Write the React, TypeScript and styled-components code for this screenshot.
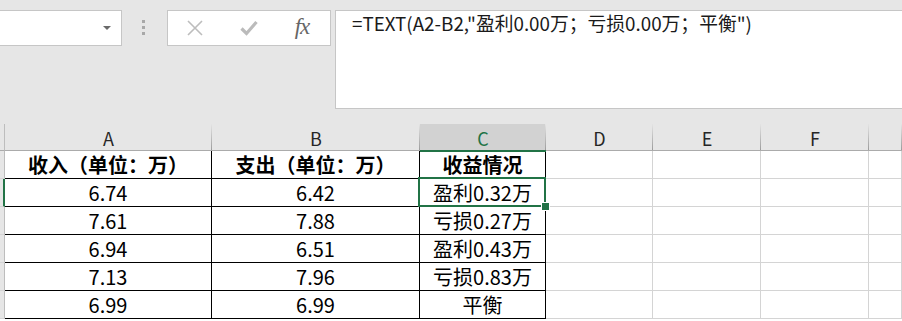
import React from 'react'
import styled, { createGlobalStyle } from 'styled-components'

const GREEN = '#217346'
const CJK = '"Noto Sans CJK SC", "Liberation Sans", sans-serif'

const GlobalStyle = createGlobalStyle`
  html, body {
    margin: 0;
    padding: 0;
    background: #fff;
  }
`

const Page = styled.div`
  width: 902px;
  height: 321px;
  overflow: hidden;
  display: flex;
  flex-direction: column;
  font-family: ${CJK};
`

const TopBar = styled.div`
  height: 124px;
  flex: none;
  background: #e6e6e6;
  display: flex;
  align-items: flex-start;
  padding-top: 10px;
  box-sizing: border-box;
`

const NameBox = styled.div`
  width: 122px;
  height: 36px;
  box-sizing: border-box;
  background: #fff;
  border: 1px solid #c6c6c6;
  border-left: none;
  display: flex;
  align-items: center;
  justify-content: flex-end;
  padding-right: 10px;
`

const Grip = styled.svg`
  margin-left: 20px;
  margin-top: 10px;
`

const ButtonBox = styled.div`
  margin-left: 22px;
  width: 164px;
  height: 36px;
  box-sizing: border-box;
  background: #fff;
  border: 1px solid #c6c6c6;
  display: flex;
  align-items: center;
`

const IconSlot = styled.div`
  width: 54px;
  display: flex;
  justify-content: center;
  align-items: center;
`

const Fx = styled.span`
  font-family: "Liberation Serif", "DejaVu Serif", serif;
  font-style: italic;
  font-size: 23px;
  color: #666;
  letter-spacing: -1px;
  line-height: 1;
  margin-top: -3px;
  margin-left: -2px;
`

const FormulaBox = styled.div`
  margin-left: 4px;
  flex: 1;
  height: 99px;
  box-sizing: border-box;
  background: #fff;
  border: 1px solid #c6c6c6;
  border-right: none;
  padding: 1px 0 0 16px;
  font-size: 18.8px;
  line-height: 22px;
  color: #1a1a1a;
  white-space: nowrap;
`

const Sheet = styled.div`
  display: grid;
  grid-template-columns: 5px 207px 208px 126px 107px 108px 108px 1fr;
  grid-auto-rows: 28px;
  grid-template-rows: 27px;
`

const Corner = styled.div`
  background: #e6e6e6;
  border-right: 1px solid #bdbdbd;
  border-bottom: 1px solid #ababab;
`

const ColHead = styled.div<{ $active?: boolean }>`
  display: flex;
  align-items: center;
  justify-content: center;
  font-size: 18px;
  color: ${p => (p.$active ? GREEN : '#262626')};
  background: linear-gradient(#e4e4e4, #9c9c9c) right / 1px 100% no-repeat,
    ${p => (p.$active ? '#d2d2d2' : '#e6e6e6')};
  border-bottom: ${p => (p.$active ? `2px solid ${GREEN}` : '1px solid #ababab')};
  margin-bottom: ${p => (p.$active ? '-1px' : '0')};
  position: relative;
  z-index: ${p => (p.$active ? 1 : 0)};
  padding-top: 1px;
`

const RowHead = styled.div<{ $active?: boolean }>`
  background: #e6e6e6;
  border-right: ${p => (p.$active ? `2px solid ${GREEN}` : '1px solid #bdbdbd')};
  border-bottom: 1px solid #d4d4d4;
`

const Cell = styled.div<{ $table?: boolean; $bold?: boolean }>`
  position: relative;
  display: flex;
  align-items: center;
  justify-content: center;
  font-size: 20px;
  font-weight: ${p => (p.$bold ? 700 : 400)};
  color: #000;
  border-right: 1px solid ${p => (p.$table ? '#000' : '#d4d4d4')};
  border-bottom: 1px solid ${p => (p.$table ? '#000' : '#d4d4d4')};
  white-space: nowrap;
`

const Selection = styled.div`
  position: absolute;
  top: -2px;
  left: -2px;
  right: -1px;
  bottom: -1px;
  border: 2px solid ${GREEN};
  pointer-events: none;
  z-index: 2;
`

const Handle = styled.div`
  position: absolute;
  right: -6px;
  bottom: -6px;
  width: 7px;
  height: 7px;
  background: ${GREEN};
  border: 1px solid #fff;
`

const rows: [string, string, string][] = [
  ['6.74', '6.42', '盈利0.32万'],
  ['7.61', '7.88', '亏损0.27万'],
  ['6.94', '6.51', '盈利0.43万'],
  ['7.13', '7.96', '亏损0.83万'],
  ['6.99', '6.99', '平衡'],
]

const columns = ['A', 'B', 'C', 'D', 'E', 'F', '']

function EmptyCells() {
  return (
    <>
      {[0, 1, 2, 3].map(i => (
        <Cell key={i} />
      ))}
    </>
  )
}

export default function App() {
  return (
    <Page>
      <GlobalStyle />
      <TopBar>
        <NameBox>
          <svg width="8" height="4" viewBox="0 0 8 4">
            <polygon points="0,0 8,0 4,4" fill="#6a6a6a" />
          </svg>
        </NameBox>
        <Grip width="3" height="16" viewBox="0 0 3 16">
          <rect x="0" y="0" width="3" height="3" fill="#a8a8a8" />
          <rect x="0" y="6" width="3" height="3" fill="#a8a8a8" />
          <rect x="0" y="12" width="3" height="3" fill="#a8a8a8" />
        </Grip>
        <ButtonBox>
          <IconSlot>
            <svg width="18" height="16" viewBox="0 0 18 16">
              <path d="M2 1 L16 15 M16 1 L2 15" stroke="#bdbdbd" strokeWidth="1.6" fill="none" />
            </svg>
          </IconSlot>
          <IconSlot>
            <svg width="18" height="16" viewBox="0 0 18 16">
              <path d="M1.5 8.5 L6.5 13.5 L16.5 2" stroke="#bbbbbb" strokeWidth="3.2" fill="none" />
            </svg>
          </IconSlot>
          <IconSlot>
            <Fx>fx</Fx>
          </IconSlot>
        </ButtonBox>
        <FormulaBox>=TEXT(A2-B2,"盈利0.00万；亏损0.00万；平衡")</FormulaBox>
      </TopBar>
      <Sheet>
        <Corner />
        {columns.map((c, i) => (
          <ColHead key={i} $active={c === 'C'}>
            {c}
          </ColHead>
        ))}

        <RowHead />
        <Cell $table $bold>收入（单位：万）</Cell>
        <Cell $table $bold>支出（单位：万）</Cell>
        <Cell $table $bold>收益情况</Cell>
        <EmptyCells />

        {rows.map((r, i) => (
          <React.Fragment key={i}>
            <RowHead $active={i === 0} />
            <Cell $table>{r[0]}</Cell>
            <Cell $table>{r[1]}</Cell>
            <Cell $table>
              {r[2]}
              {i === 0 && (
                <Selection>
                  <Handle />
                </Selection>
              )}
            </Cell>
            <EmptyCells />
          </React.Fragment>
        ))}
      </Sheet>
    </Page>
  )
}
